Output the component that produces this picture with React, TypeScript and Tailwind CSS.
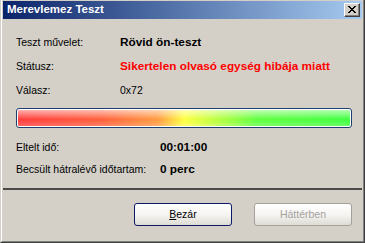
import React from 'react';

const font = { fontFamily: '"Liberation Sans", Arial, sans-serif' };

function CloseButton() {
  return (
    <div className="w-[16px] h-[14px] border border-t-white border-l-white border-r-[#404040] border-b-[#404040] bg-[#d4d0c8]">
      <div className="w-full h-full border-r border-b border-r-[#808080] border-b-[#808080] flex items-center justify-center">
        <svg width="8" height="7" viewBox="0 0 8 7" shapeRendering="crispEdges">
          <path d="M0 0h2v1h-2zM6 0h2v1h-2zM1 1h2v1h-2zM5 1h2v1h-2zM2 2h4v1h-4zM3 3h2v1h-2zM2 4h4v1h-4zM1 5h2v1h-2zM5 5h2v1h-2zM0 6h2v1h-2zM6 6h2v1h-2z" fill="#000" />
        </svg>
      </div>
    </div>
  );
}

function Row({ label, value, valueClass, labelWidth, height }: { label: string; value: string; valueClass: string; labelWidth: string; height: string }) {
  return (
    <div className={`flex items-center ${height}`}>
      <div className={`${labelWidth} shrink-0 text-[10.5px] text-black`}>{label}</div>
      <div className={valueClass}>{value}</div>
    </div>
  );
}

export default function App() {
  return (
    <div className="w-[365px] h-[243px] bg-[#d4d0c8] select-none" style={font}>
      <div className="w-full h-full border-l border-r border-b border-l-[#d4d0c8] border-r-[#404040] border-b-[#404040]">
        <div className="w-full h-full border-l border-r border-b border-l-white border-r-[#808080] border-b-[#808080] pt-[1px] px-[1px] flex flex-col">
          {/* title bar */}
          <div className="h-[18px] shrink-0 flex items-center justify-between pl-[4px] pr-[2px] bg-[linear-gradient(to_right,#0a246a,#a6caf0)]">
            <span className="text-white font-bold text-[11.5px] leading-none">Merevlemez Teszt</span>
            <CloseButton />
          </div>

          {/* body */}
          <div className="flex flex-col pt-[12px] pl-[13px] pr-[11px] h-[171px] shrink-0 border-b-2 border-b-[#4a4a4a]">
            <Row label="Teszt művelet:" value="Rövid ön-teszt" valueClass="text-[11.8px] font-bold text-black" labelWidth="w-[104px]" height="h-[24px]" />
            <Row label="Státusz:" value="Sikertelen olvasó egység hibája miatt" valueClass="text-[11.8px] font-bold text-[#ff0000] whitespace-nowrap" labelWidth="w-[104px]" height="h-[24px]" />
            <Row label="Válasz:" value="0x72" valueClass="text-[10.5px] text-black" labelWidth="w-[104px]" height="h-[24px]" />

            <div className="mt-[5px] w-[336px] h-[20px] rounded-[3px] border border-[#1c3f6e] bg-white p-[1px]">
              <div className="w-full h-full rounded-[1px] bg-[linear-gradient(to_bottom,rgba(255,255,255,0.6),rgba(255,255,255,0.15)_45%,rgba(255,255,255,0)_60%,rgba(255,255,255,0.2)),linear-gradient(to_right,#ff3c3c,#ff603c_25%,#ff9a40_42%,#ffff40_50%,#c8ff40_58%,#60ff40_72%,#40ff40)]" />
            </div>

            <div className="mt-[9px]">
              <Row label="Eltelt idő:" value="00:01:00" valueClass="text-[11.8px] font-bold text-black" labelWidth="w-[144px]" height="h-[22px]" />
              <Row label="Becsült hátralévő időtartam:" value="0 perc" valueClass="text-[11.8px] font-bold text-black" labelWidth="w-[144px]" height="h-[22px]" />
            </div>
          </div>

          {/* buttons */}
          <div className="flex justify-end gap-[22px] pt-[13px] pr-[10px]">
            <button className="w-[98px] h-[23px] rounded-[3px] border border-[#0c1a6a] bg-[linear-gradient(to_bottom,#ffffff,#f6f5f2_50%,#dedbd4)] text-[10.5px] text-black flex items-center justify-center">
              <span><span className="underline">B</span>ezár</span>
            </button>
            <button disabled className="w-[98px] h-[23px] rounded-[3px] border border-[#a4a19c] bg-[linear-gradient(to_bottom,#ffffff,#f6f5f2_50%,#dedbd4)] text-[10.5px] text-[#a4a19c] flex items-center justify-center">
              Háttérben
            </button>
          </div>
        </div>
      </div>
    </div>
  );
}
